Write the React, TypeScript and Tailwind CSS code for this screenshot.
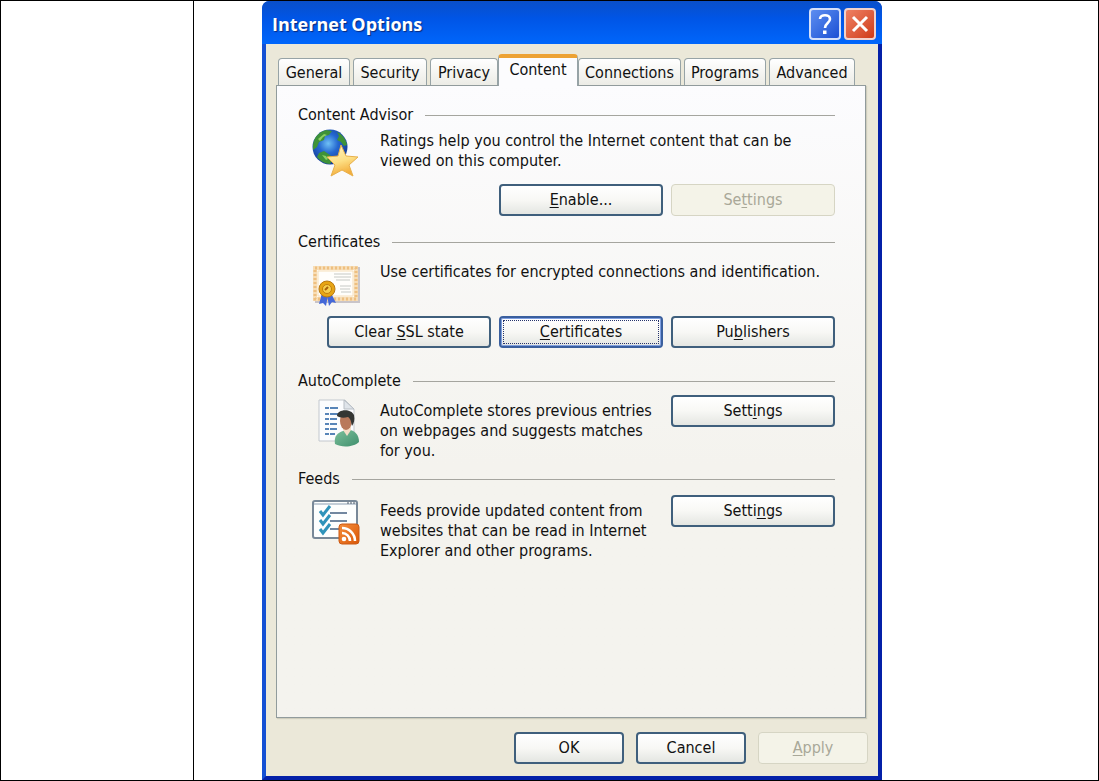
import type { ReactNode } from "react";
import { clsx } from "clsx";

const tabs = [
  { name: "General", width: "w-[72px]" },
  { name: "Security", width: "w-[74px]" },
  { name: "Privacy", width: "w-[68px]" },
  { name: "Content", width: "w-[80px]" },
  { name: "Connections", width: "w-[103px]" },
  { name: "Programs", width: "w-[82px]" },
  { name: "Advanced", width: "w-[86px]" },
];

function Key({ children }: { children: ReactNode }) {
  return <span className="underline underline-offset-2">{children}</span>;
}

type XpButtonProps = {
  children: ReactNode;
  small?: boolean;
  disabled?: boolean;
  focused?: boolean;
};

function XpButton({ children, small, disabled, focused }: XpButtonProps) {
  return (
    <button
      type="button"
      disabled={disabled}
      className={clsx(
        "h-8 shrink-0 rounded-[4px] p-[2px]",
        small ? "w-[110px]" : "w-[164px]",
        disabled
          ? "border border-[#d6d5c4] bg-[#f4f3e8] text-[#a9a898]"
          : "border-2 bg-linear-to-b from-white via-[#f8f8f5] to-[#e4e6e2]",
        !disabled &&
          (focused
            ? "border-[#3a5f9e] shadow-[inset_0_0_0_1px_#7f9fe0]"
            : "border-[#3f5f7c]"),
      )}
    >
      <span
        className={clsx(
          "flex h-full items-center justify-center",
          focused && "border border-dotted border-[#26346c]",
        )}
      >
        <span>{children}</span>
      </span>
    </button>
  );
}

function Legend({ children }: { children: ReactNode }) {
  return (
    <div className="flex items-center gap-3">
      <h2>{children}</h2>
      <div className="h-px flex-1 bg-[#a5a59f]" />
    </div>
  );
}

function GlobeIcon() {
  return (
    <svg width="50" height="48" viewBox="0 2 50 48" aria-hidden="true">
      <defs>
        <radialGradient id="sea" cx="0.45" cy="0.4" r="0.62">
          <stop offset="0" stopColor="#6fc0f5" />
          <stop offset="0.45" stopColor="#2467d0" />
          <stop offset="1" stopColor="#163b94" />
        </radialGradient>
        <linearGradient id="star" x1="0" y1="0" x2="0.3" y2="1">
          <stop offset="0" stopColor="#fff6c8" />
          <stop offset="0.6" stopColor="#fddf84" />
          <stop offset="1" stopColor="#f3ae3c" />
        </linearGradient>
      </defs>
      <circle cx="20" cy="20" r="17.5" fill="url(#sea)" />
      <path d="M3 18C4 10 9 5 16 3l6 1-3 4-4 1-1 4-5 2-2 5-4 3zM27 5c5 2 9 7 10 13l-3 1-3-4-4-2 2-4zM9 26l5-2 6 4 3 4-3 5c-5 0-10-3-13-7z" fill="#3e9238" />
      <path d="M8 12l6-5 3 1-4 2-3 4z M12 28l4 1 2 3-2 1z" fill="#8bd063" />
      <path d="M31 18l5 11 12 1-9 8 4 11-11-6-11 6 4-11-8-8 11-1z" fill="url(#star)" stroke="#e8b04b" />
    </svg>
  );
}

function CertificateIcon() {
  return (
    <svg width="50" height="46" viewBox="-1 -4 50 46" aria-hidden="true">
      <path d="M4 38h44V3" fill="none" stroke="#c9c5c9" strokeWidth="2" />
      <path d="M2 2h45v35H2z" fill="#fff9ed" />
      <path d="M4 4h41v31H4z" fill="none" stroke="#f7ddb6" strokeWidth="4" />
      <path d="M4 4h41v31H4z" fill="none" stroke="#eebf80" strokeWidth="3" strokeDasharray="2 2" />
      <path d="M7 7h35v25H7z" fill="#fffefb" stroke="#f6dfbb" />
      <path d="M23 10h17M23 13h17M25 16h14M29 22h11M29 25h10M30 28h10" stroke="#c6c9c5" />
      <path d="M11 29l-3 11 4-1 3 3 2-11zM20 29l5 10-4-1-3 4-2-11z" fill="#4468d8" />
      <circle cx="16" cy="25" r="8" fill="#e7a514" stroke="#b87812" />
      <circle cx="16" cy="25" r="4.5" fill="#f6ce4c" stroke="#c27d0e" />
      <path d="M14 26l3-3" stroke="#a8600b" strokeWidth="2" />
    </svg>
  );
}

function PersonIcon() {
  return (
    <svg width="42" height="48" viewBox="0 0 42 48" aria-hidden="true">
      <defs>
        <linearGradient id="coat" x1="0" y1="0" x2="1" y2="1">
          <stop offset="0" stopColor="#7cc09b" />
          <stop offset="1" stopColor="#3f8f6d" />
        </linearGradient>
      </defs>
      <path d="M1 1h26l9 9v32H1z" fill="#fbfcfe" stroke="#c3c8ce" />
      <path d="M26 1v9h10z" fill="#dfe4ea" stroke="#b8bec5" />
      <path d="M7 9h14M7 15h13M7 20h12M7 25h12M7 30h12M7 35h10" stroke="#5784b8" strokeWidth="2" strokeDasharray="4 1 8 1" />
      <path d="M17 45c-1-6 1-11 8-13l7-1c6 1 9 6 9 12-5 5-17 6-24 2z" fill="url(#coat)" />
      <path d="M25 31l4 6 4-6v-5h-8z" fill="#f4ddc7" />
      <ellipse cx="28" cy="22" rx="6" ry="9" fill="#b9795b" />
      <path d="M19 17c0-7 14-8 17-1 1 5 0 8-2 11-1-4-1-7-4-9-4 1-8 1-11-1z" fill="#343633" />
    </svg>
  );
}

function FeedsIcon() {
  return (
    <svg width="50" height="46" viewBox="-1 -1 50 46" aria-hidden="true">
      <defs>
        <linearGradient id="rss" x1="0" y1="0" x2="1" y2="1">
          <stop offset="0" stopColor="#f58e3c" />
          <stop offset="1" stopColor="#da5708" />
        </linearGradient>
      </defs>
      <rect x="2" y="1" width="44" height="37" rx="2" fill="#fdfefe" stroke="#788898" strokeWidth="2" />
      <path d="M3 4h42" stroke="#c4ced8" strokeWidth="2" />
      <path d="M36 3h2M39 3h2M42 3h2" stroke="#4c5b6b" />
      <path d="M19 13h17M19 21h17M19 29h10" stroke="#7287a0" strokeWidth="2" />
      <path d="M9 11l3 4 7-9M9 20l3 4 7-9M9 29l3 4 7-9" fill="none" stroke="#2f93ba" strokeWidth="3" />
      <rect x="28" y="24" width="20" height="20" rx="3" fill="url(#rss)" stroke="#cb5a15" />
      <circle cx="33" cy="39" r="2.3" fill="#fff" />
      <path d="M31 33a8 8 0 0 1 8 8M31 28a13 13 0 0 1 13 13" fill="none" stroke="#fff" strokeWidth="2.6" />
    </svg>
  );
}

type SectionBodyProps = {
  icon: ReactNode;
  action?: ReactNode;
  children: ReactNode;
};

function SectionBody({ icon, action, children }: SectionBodyProps) {
  return (
    <div className="flex items-start">
      <div className="flex w-[82px] shrink-0 justify-end pt-1 pr-5">{icon}</div>
      <p className={clsx("flex-1 pt-[6px]", action ? "pr-4" : "pr-8")}>
        {children}
      </p>
      {action}
    </div>
  );
}

function TitleBar() {
  return (
    <header className="flex h-[43px] items-center gap-[3px] rounded-t-[7px] bg-linear-to-b from-[#0a4fc8] via-[#0055e6] via-40% to-[#0066fb] pt-[3px] pr-[6px] pl-[10px]">
      <h1 className="flex-1 font-['Open_Sans','Noto_Sans',sans-serif] text-lg font-bold text-white [text-shadow:1px_1px_1px_#0a2a7a]">
        Internet Options
      </h1>
      <button
        type="button"
        aria-label="Help"
        className="flex size-8 items-center justify-center rounded-[4px] border-2 border-[#d5e0fa] bg-linear-to-br from-[#5d8df0] to-[#1c4fd4]"
      >
        <svg width="16" height="22" viewBox="0 0 16 22" fill="none" aria-hidden="true">
          <path d="M3 6c0-5 10-5 10 0 0 4-5 4-5 9" stroke="#fff" strokeWidth="2.6" />
          <path d="M6 17.500h3.500v3.500H6z" fill="#fff" />
        </svg>
      </button>
      <button
        type="button"
        aria-label="Close"
        className="flex size-8 items-center justify-center rounded-[4px] border-2 border-[#f1d3cd] bg-linear-to-br from-[#ee8063] to-[#cf3a12]"
      >
        <svg width="18" height="18" viewBox="0 0 18 18" aria-hidden="true">
          <path d="M2 2l14 14M16 2L2 16" stroke="#fff" strokeWidth="3" />
        </svg>
      </button>
    </header>
  );
}

function InternetOptions() {
  return (
    <div className="flex w-full max-w-[620px] flex-col rounded-t-lg bg-linear-to-r from-[#0a50dc] from-50% to-[#0420a0] to-50% font-['DejaVu_Sans_Condensed','Noto_Sans',sans-serif] text-base leading-5 text-[#111]">
      <TitleBar />
      <div className="flex flex-1 flex-col border-x-4 border-t-0 border-b-4 border-r-[#0420a8] border-b-[#0420a8] border-l-[#1450d4] bg-[#ebe8d9] px-[10px] pt-[10px] pb-3">
        <div role="tablist" className="flex items-end gap-[3px] pl-[2px]">
          {tabs.map(({ name, width }) => (
            <button
              key={name}
              type="button"
              role="tab"
              aria-selected={name === "Content"}
              className={clsx(
                "rounded-t-[4px] border border-b-0 border-[#97a3a6]",
                width,
                name === "Content"
                  ? "relative z-10 -mx-[3px] -mb-px h-8 border-t-4 border-t-[#eda233] bg-[#fcfcfe] pb-1"
                  : "h-[27px] bg-linear-to-b from-white to-[#ececE6] pt-[2px]",
              )}
            >
              {name}
            </button>
          ))}
        </div>

        <main className="mr-[2px] flex flex-1 flex-col border border-[#919b9c] bg-linear-to-b from-[#fcfcfe] to-[#f4f3ee] to-60% pt-[19px] pr-[30px] pl-[21px] shadow-[1px_1px_1px_#cfcdbd]">
          <section className="mb-4">
            <Legend>Content Advisor</Legend>
            <SectionBody icon={<GlobeIcon />}>
              Ratings help you control the Internet content that can be viewed
              on this computer.
            </SectionBody>
            <div className="mt-[7px] flex justify-end gap-2">
              <XpButton>
                <Key>E</Key>nable...
              </XpButton>
              <XpButton disabled>
                Se<Key>t</Key>tings
              </XpButton>
            </div>
          </section>

          <section className="mb-[23px]">
            <Legend>Certificates</Legend>
            <div className="pt-1">
              <SectionBody icon={<CertificateIcon />}>
                <span className="whitespace-nowrap">
                  Use certificates for encrypted connections and identification.
                </span>
              </SectionBody>
            </div>
            <div className="mt-[10px] flex justify-end gap-2">
              <XpButton>
                Clear <Key>S</Key>SL state
              </XpButton>
              <XpButton focused>
                <Key>C</Key>ertificates
              </XpButton>
              <XpButton>
                Pu<Key>b</Key>lishers
              </XpButton>
            </div>
          </section>

          <section className="mb-2">
            <Legend>AutoComplete</Legend>
            <div className="pt-1">
              <SectionBody
                icon={<PersonIcon />}
                action={
                  <XpButton>
                    Sett<Key>i</Key>ngs
                  </XpButton>
                }
              >
                AutoComplete stores previous entries on webpages and suggests
                matches for you.
              </SectionBody>
            </div>
          </section>

          <section>
            <Legend>Feeds</Legend>
            <div className="pt-[6px]">
              <SectionBody
                icon={<FeedsIcon />}
                action={
                  <XpButton>
                    Setti<Key>n</Key>gs
                  </XpButton>
                }
              >
                Feeds provide updated content from websites that can be read in
                Internet Explorer and other programs.
              </SectionBody>
            </div>
          </section>
        </main>

        <footer className="flex justify-end gap-3 pt-[14px]">
          <XpButton small>OK</XpButton>
          <XpButton small>Cancel</XpButton>
          <XpButton small disabled>
            <Key>A</Key>pply
          </XpButton>
        </footer>
      </div>
    </div>
  );
}

export default function App() {
  return (
    <div className="flex min-h-screen border border-black bg-white">
      <div className="w-[193px] shrink-0 border-r border-black" />
      <div className="flex flex-1 pl-[68px]">
        <InternetOptions />
      </div>
    </div>
  );
}
